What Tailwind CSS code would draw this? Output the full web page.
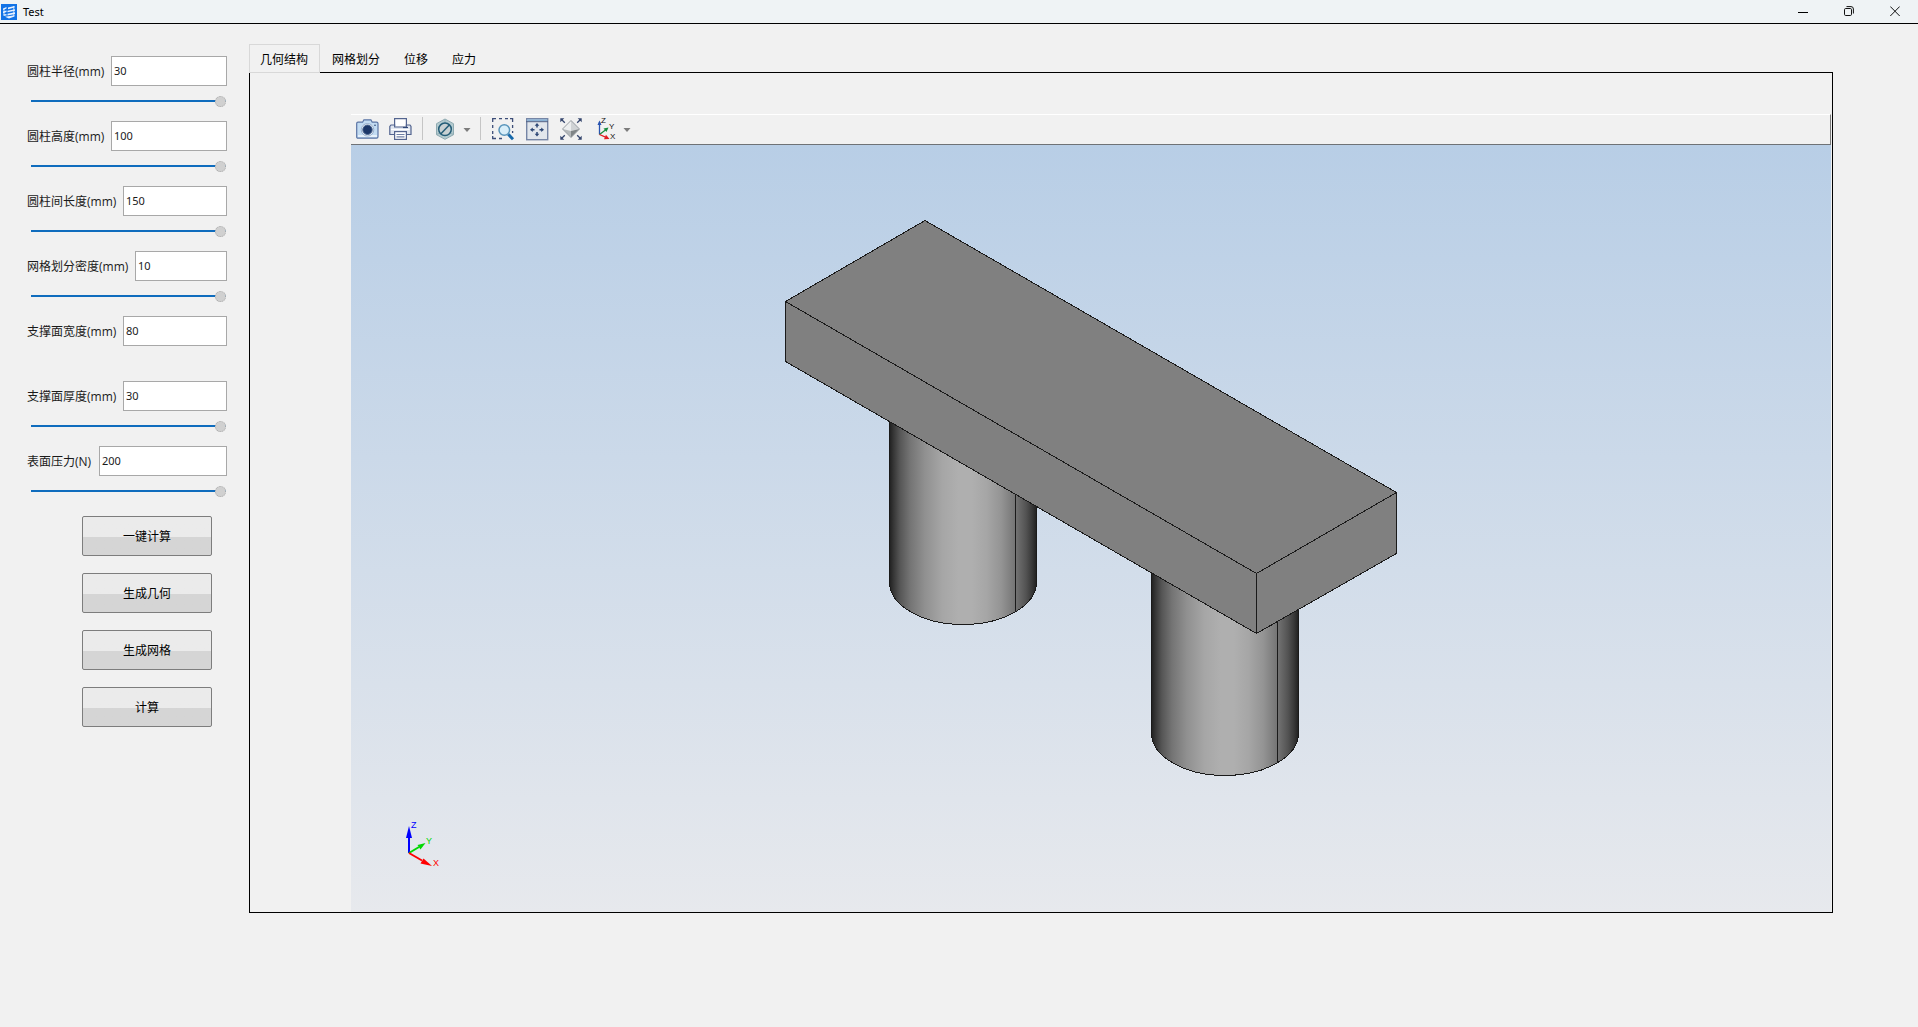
<!DOCTYPE html>
<html lang="zh-CN">
<head>
<meta charset="utf-8">
<title>Test</title>
<script src="https://cdn.jsdelivr.net/npm/@tailwindcss/browser@4"></script>
</head>
<body class="flex min-h-screen flex-col bg-[#f1f1f1] font-['Open_Sans','Noto_Sans_CJK_SC',sans-serif] text-xs text-[#1a1a1a]">

<header class="flex h-6 items-center border-b border-black bg-[#eff3f5]">
  <svg class="ml-px size-4" viewBox="0 0 16 16" aria-hidden="true">
    <rect width="16" height="16" fill="#1273e6"/>
    <path d="M2 4.500 5.500 3v1.600L2 6zM2 7.500l3.500-1v1.600L2 9.200zM2.300 10.500l3.200-.6v1.600l-2.200.3z" fill="#e8f2ff"/>
    <path d="M7 3.500 13.500 2v1.600L7 5.300zM6.500 6.800 14 5.200v1.500L6.500 8.300zM6.500 9.800 14 8.300v1.600L6.500 11.400zM4 12.700l9.500-1.500v1.300L8 14.500z" fill="#e8f2ff"/>
    <path d="M12.800 2v10M3 5v7" stroke="#e8f2ff" stroke-width=".8"/>
  </svg>
  <h1 class="ml-1.5 flex-1 pt-px font-['Noto_Sans',sans-serif] text-[11px] text-black">Test</h1>
  <button class="flex h-5 w-[46px] items-center justify-center" aria-label="最小化"><svg class="h-[11px] w-2.5" viewBox="0 0 10 11"><path d="M0 6.500h10" stroke="#000"/></svg></button>
  <button class="flex h-5 w-[46px] items-center justify-center" aria-label="还原"><svg class="h-[11px] w-2.5" viewBox="0 0 10 11" fill="none" stroke="#111"><rect x=".5" y="2.500" width="7" height="7" rx="1.200"/><path d="M2.500.6H7Q9.400.6 9.400 3v4.500"/></svg></button>
  <button class="flex h-5 w-[46px] items-center justify-center" aria-label="关闭"><svg class="h-[11px] w-2.5" viewBox="0 0 10 11"><path d="M.3.500 9.700 10M9.700.500.3 10" stroke="#111"/></svg></button>
</header>

<main class="flex flex-1 items-start">
  <aside class="ml-[27px] w-[200px] shrink-0 pt-8">
    <form class="flex flex-col gap-3.5 [&_::-webkit-slider-runnable-track]:h-0.5 [&_::-webkit-slider-runnable-track]:bg-[#0f6cbd] [&_::-webkit-slider-thumb]:-mt-1 [&_::-webkit-slider-thumb]:size-[11px] [&_::-webkit-slider-thumb]:appearance-none [&_::-webkit-slider-thumb]:rounded-full [&_::-webkit-slider-thumb]:border [&_::-webkit-slider-thumb]:border-dotted [&_::-webkit-slider-thumb]:border-[#aaa] [&_::-webkit-slider-thumb]:bg-[#d0d0d0]">
      <div class="h-[51px]">
        <div class="flex items-center justify-between"><label for="r" class="pt-0.5">圆柱半径(mm)</label><input id="r" value="30" class="h-[30px] w-[116px] border border-[#a8a8a8] bg-white px-0.5 pb-0.5 font-['Noto_Sans',sans-serif] text-[11px]"></div>
        <input type="range" value="100" aria-label="圆柱半径" class="mt-[9px] ml-1 block h-[11px] w-[195px] appearance-none bg-transparent">
      </div>
      <div class="h-[51px]">
        <div class="flex items-center justify-between"><label for="h" class="pt-0.5">圆柱高度(mm)</label><input id="h" value="100" class="h-[30px] w-[116px] border border-[#a8a8a8] bg-white px-0.5 pb-0.5 font-['Noto_Sans',sans-serif] text-[11px]"></div>
        <input type="range" value="100" aria-label="圆柱高度" class="mt-[9px] ml-1 block h-[11px] w-[195px] appearance-none bg-transparent">
      </div>
      <div class="h-[51px]">
        <div class="flex items-center justify-between"><label for="l" class="pt-0.5">圆柱间长度(mm)</label><input id="l" value="150" class="h-[30px] w-[104px] border border-[#a8a8a8] bg-white px-0.5 pb-0.5 font-['Noto_Sans',sans-serif] text-[11px]"></div>
        <input type="range" value="100" aria-label="圆柱间长度" class="mt-[9px] ml-1 block h-[11px] w-[195px] appearance-none bg-transparent">
      </div>
      <div class="h-[51px]">
        <div class="flex items-center justify-between"><label for="m" class="pt-0.5">网格划分密度(mm)</label><input id="m" value="10" class="h-[30px] w-[92px] border border-[#a8a8a8] bg-white px-0.5 pb-0.5 font-['Noto_Sans',sans-serif] text-[11px]"></div>
        <input type="range" value="100" aria-label="网格划分密度" class="mt-[9px] ml-1 block h-[11px] w-[195px] appearance-none bg-transparent">
      </div>
      <div class="h-[51px]">
        <div class="flex items-center justify-between"><label for="w" class="pt-0.5">支撑面宽度(mm)</label><input id="w" value="80" class="h-[30px] w-[104px] border border-[#a8a8a8] bg-white px-0.5 pb-0.5 font-['Noto_Sans',sans-serif] text-[11px]"></div>
      </div>
      <div class="h-[51px]">
        <div class="flex items-center justify-between"><label for="t" class="pt-0.5">支撑面厚度(mm)</label><input id="t" value="30" class="h-[30px] w-[104px] border border-[#a8a8a8] bg-white px-0.5 pb-0.5 font-['Noto_Sans',sans-serif] text-[11px]"></div>
        <input type="range" value="100" aria-label="支撑面厚度" class="mt-[9px] ml-1 block h-[11px] w-[195px] appearance-none bg-transparent">
      </div>
      <div class="h-[51px]">
        <div class="flex items-center justify-between"><label for="p" class="pt-0.5">表面压力(N)</label><input id="p" value="200" class="h-[30px] w-[128px] border border-[#a8a8a8] bg-white px-0.5 pb-0.5 font-['Noto_Sans',sans-serif] text-[11px]"></div>
        <input type="range" value="100" aria-label="表面压力" class="mt-[9px] ml-1 block h-[11px] w-[195px] appearance-none bg-transparent">
      </div>
    </form>
    <div class="mt-[19px] ml-[55px] flex w-[130px] flex-col gap-[17px] text-black">
      <button class="h-10 rounded-[2px] border border-[#7d7d7d] bg-linear-to-b from-[#ebebeb] from-[20px] to-[#d5d5d5] to-[20px] pt-0.5">一键计算</button>
      <button class="h-10 rounded-[2px] border border-[#7d7d7d] bg-linear-to-b from-[#ebebeb] from-[20px] to-[#d5d5d5] to-[20px] pt-0.5">生成几何</button>
      <button class="h-10 rounded-[2px] border border-[#7d7d7d] bg-linear-to-b from-[#ebebeb] from-[20px] to-[#d5d5d5] to-[20px] pt-0.5">生成网格</button>
      <button class="h-10 rounded-[2px] border border-[#7d7d7d] bg-linear-to-b from-[#ebebeb] from-[20px] to-[#d5d5d5] to-[20px] pt-0.5">计算</button>
    </div>
  </aside>

  <section class="mr-[85px] ml-[22px] min-w-0 flex-1 pt-5">
    <div role="tablist" class="relative z-10 -mb-px flex text-black">
      <button role="tab" aria-selected="true" class="h-[29px] border border-[#d8d8d8] bg-[#f1f1f1] pt-0.5 pr-[11px] pl-2.5">几何结构</button>
      <button role="tab" class="h-[29px] px-3 pt-0.5">网格划分</button>
      <button role="tab" class="h-[29px] px-3 pt-0.5">位移</button>
      <button role="tab" class="h-[29px] px-3 pt-0.5">应力</button>
    </div>
    <div role="tabpanel" class="border border-black pt-[41px] pr-px pl-[101px]">
      <div role="toolbar" class="flex h-[31px] border-t border-r border-b border-t-white border-r-[#7b7b7b] border-b-[#6f7276] pt-0.5">
        <button class="flex w-[33px] justify-center" aria-label="快照"><svg class="size-6" viewBox="0 0 24 24">
          <path d="M.7 6.500Q.7 5.200 2 5.200h4.600l1.300-2.400h7l1.300 2.400h4.300q1.500 0 1.500 1.400v13.200q0 1.400-1.400 1.400H2Q.7 21.200.7 19.900z" fill="#c3dcf2" stroke="#5a74a4" stroke-width="1.200"/>
          <path d="M2 18h19v2H2z" fill="#e6f1fb"/><circle cx="11.500" cy="12.800" r="6.300" fill="#e3ebf2" stroke="#8ba3c4" stroke-width=".8"/><circle cx="11.500" cy="12.800" r="4.700" fill="#1c3768" stroke="#49648e"/><circle cx="19" cy="8.300" r=".8" fill="#27406f"/></svg></button>
        <button class="flex w-[34px] justify-center" aria-label="打印"><svg class="size-6" viewBox="0 0 24 24" stroke="#53648f" stroke-width="1.200">
          <path d="M5.600 9V1.600h11.800V9" fill="#fff"/><path d="M2 8h3.600v2h11.800V8H21l1 1.500v8H.8v-8z" fill="#dfe5ef"/><path d="M2 12.500h18.500" stroke="#fff"/><path d="M14 10.500h5" stroke="#304777"/>
          <rect x="5.600" y="14.600" width="11.800" height="7.800" fill="#fff"/><path d="M7.500 17.500h8M7.500 19.800h8" stroke="#7080a5"/></svg></button>
        <i class="ml-1 h-[23px] w-px bg-[#c5c5c5]"></i>
        <button class="ml-[5px] flex w-[34px] justify-center" aria-label="选择模式"><svg class="size-6" viewBox="0 0 24 24">
          <path d="M12 2 20.500 6.700v11L12 22.300l-8.500-4.600v-11z" fill="#b4cbd0" stroke="#8eaab1"/><path d="M12 2.500v4M3.700 17.500 7 16M20.300 17.500 17 16" stroke="#93afb6"/><circle cx="12" cy="12.300" r="6.300" fill="#c8d1d3" stroke="#245d77" stroke-width="1.500"/><path d="M7.700 17 16.500 7.800" stroke="#245d77" stroke-width="1.500"/></svg></button>
        <button class="flex w-2.5 justify-center" aria-label="选择模式选项"><svg class="h-6 w-2" viewBox="0 0 8 24"><path d="M.5 11h7L4 15z" fill="#7c7c7c"/></svg></button>
        <i class="ml-2 h-[23px] w-px bg-[#c5c5c5]"></i>
        <button class="ml-[5px] flex w-[34px] justify-center" aria-label="框选缩放"><svg class="size-6" viewBox="0 0 24 24" fill="none">
          <path d="M1.700 5V1.700H5M8 1.700h3M14 1.700h3M19 1.700h2.600V5M21.600 8v3M21.600 14v2M1.700 8v3M1.700 14v3M1.700 19v2.500H5M8 21.500h3" stroke="#3c4d78" stroke-width="1.300"/>
          <path d="m17.300 17.300 4.700 5" stroke="#1769aa" stroke-width="3"/><circle cx="13.300" cy="13" r="5.300" fill="#d8eef9" stroke="#5995bb" stroke-width="1.500"/></svg></button>
        <button class="flex w-[34px] justify-center" aria-label="缩放到窗口"><svg class="size-6" viewBox="0 0 24 24">
          <rect x="1.700" y="1.700" width="21" height="21" fill="#e1e6ec" stroke="#7686a6" stroke-width="1.400"/><path d="M2.300 2.300h19.800v2H2.300z" fill="#89b1d5"/><path d="M1 4.700h22" stroke="#506184"/>
          <path d="M12 10.500V8M12 15V17.500M9.500 12.700H7M14.500 12.700H17" stroke="#2d4775" stroke-width="1.500"/><path d="m12 6 2.300 2.800H9.700zM12 19.500l2.300-2.800H9.700zM5 12.700l2.800-2.300V15zM19 12.700l-2.800-2.300V15z" fill="#2d4775"/></svg></button>
        <button class="flex w-[34px] justify-center" aria-label="全部显示"><svg class="size-6" viewBox="0 0 24 24">
          <path d="m2.500 2.500 3.300 3.300M21.500 2.500l-3.300 3.300M2.500 21.500l3.300-3.300M21.500 21.500l-3.300-3.300" stroke="#34456d" stroke-width="1.300"/><path d="M1.300 1.300h4L1.300 5.300zM22.700 1.300h-4l4 4zM1.300 22.700h4l-4-4zM22.700 22.700h-4l4-4z" fill="#34456d"/>
          <path d="M12 3.500V14L3.700 12z" fill="#eceeef"/><path d="M12 3.500V14l8.300-2z" fill="#d0d3d5"/><path d="M3.700 12 12 14v6.500z" fill="#b4b8ba"/><path d="M20.300 12 12 14v6.500z" fill="#7f8486"/><path d="m12 3.500 8.500 8.500-8.500 8.500L3.500 12z" fill="none" stroke="#8a9197" stroke-width=".9"/></svg></button>
        <button class="flex w-[34px] justify-center" aria-label="视图方向"><svg class="size-6 overflow-visible" viewBox="0 0 24 24">
          <path d="M6.500 17.500V5" stroke="#2853b0" stroke-width="1.300"/><path d="m6.500 3.500 2 4.500h-4z" fill="#2853b0"/>
          <path d="m6.500 17.500 6-4.500" stroke="#178b3e" stroke-width="1.300"/><path d="m15.500 10.500-2 4.500-3-3.500z" fill="#178b3e"/>
          <path d="m6.500 17.500 6 2.700" stroke="#e21b22" stroke-width="1.300"/><path d="m16.500 22-5.500.3 2-4.600z" fill="#e21b22"/>
          <g class="font-['Liberation_Sans',sans-serif] text-[8px]" fill="#111"><text x="8" y="6">Z</text><text x="16" y="12">Y</text><text x="17" y="22">X</text></g></svg></button>
        <button class="flex w-2.5 justify-center" aria-label="视图方向选项"><svg class="h-6 w-2" viewBox="0 0 8 24"><path d="M.5 11h7L4 15z" fill="#7c7c7c"/></svg></button>
      </div>
      <div class="bg-linear-to-b from-[#b8cee6] to-[#e7e9ed]">
        <svg class="block h-auto w-full" viewBox="351 145 1480 767" role="img" aria-label="几何模型">
          <defs>
            <linearGradient id="cyl">
              <stop offset="0" stop-color="#202020"/><stop offset=".03" stop-color="#383838"/><stop offset=".07" stop-color="#555"/><stop offset=".14" stop-color="#747474"/><stop offset=".24" stop-color="#909090"/><stop offset=".36" stop-color="#a6a6a6"/><stop offset=".47" stop-color="#afafaf"/><stop offset=".56" stop-color="#afafaf"/><stop offset=".66" stop-color="#a6a6a6"/><stop offset=".76" stop-color="#949494"/><stop offset=".86" stop-color="#737373"/><stop offset=".93" stop-color="#525252"/><stop offset=".97" stop-color="#383838"/><stop offset="1" stop-color="#202020"/>
            </linearGradient>
          </defs>
          <g stroke="#1a1a1a" shape-rendering="crispEdges" stroke-linejoin="round">
            <path d="M889.500 400V582A73.500 42.500 0 0 0 1036.500 582V400z" fill="url(#cyl)"/>
            <path d="M1015.500 450V611.500"/>
            <path d="M1151.500 540V733A73.500 42.500 0 0 0 1298.500 733V540z" fill="url(#cyl)"/>
            <path d="M1277.500 600V763"/>
            <path d="M925 220.500 1396.500 492.500V553.500L1256.500 633.500 785.500 361.500V301.500z" fill="#808080"/>
            <path d="M785.500 301.500 1256.500 573.500 1396.500 492.500M1256.500 573.500V633.500" fill="none"/>
          </g>
          <g stroke-width="2"><path d="M409 853v-16" stroke="#00f"/><path d="m409 826 3 12h-6z" fill="#00f"/>
            <path d="m409 853 10-6" stroke="#00d800"/><path d="m425.500 843-5 6.500-3-4.500z" fill="#00d800"/>
            <path d="m409 853 13 7.500" stroke="#f00"/><path d="m432 866-11.500-2.500 3-5z" fill="#f00"/></g>
          <g class="font-['Liberation_Sans',sans-serif] text-[9px]"><text x="411" y="828" fill="#00f">Z</text><text x="426" y="844" fill="#00d800">Y</text><text x="433" y="866" fill="#f00">X</text></g>
        </svg>
      </div>
    </div>
  </section>
</main>
</body>
</html>
